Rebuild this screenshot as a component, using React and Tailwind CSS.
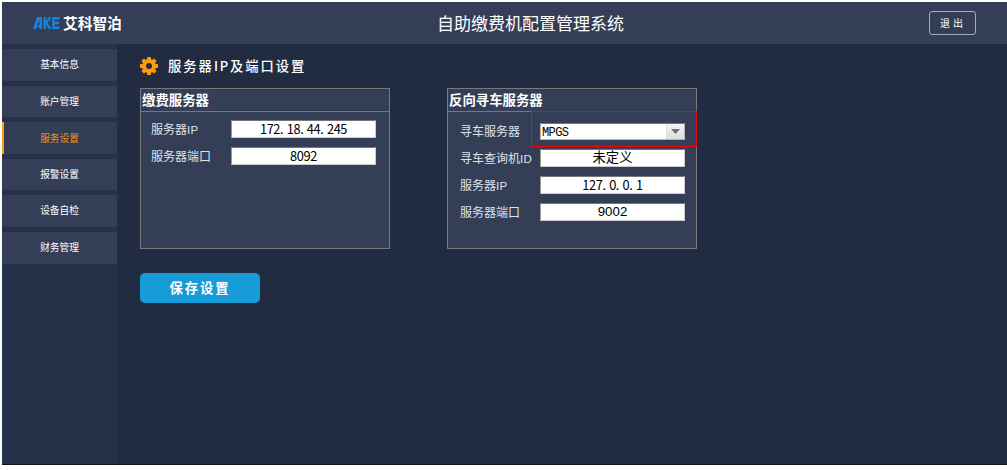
const menu = ["基本信息", "账户管理", "服务设置", "报警设置", "设备自检", "财务管理"];

function Gear() {
  return (
    <svg className="size-[18px] shrink-0" viewBox="-9 -9 18 18" fill="#fd9b0c">
      {[0, 45, 90, 135].map((a) => (
        <rect key={a} x="-2" y="-9" width="4" height="18" rx="0.6" transform={`rotate(${a})`} />
      ))}
      <circle r="6.9" />
      <circle r="3" fill="#212c42" />
    </svg>
  );
}

/* Half-width latin text: a dot takes up as much room as a digit. */
function Narrow({ text }) {
  return text.split(/(\.)/).map((part, i) =>
    part === "." ? (
      <span key={i} className="inline-block w-[6.7px] text-left">.</span>
    ) : (
      <span key={i}>{part}</span>
    )
  );
}

function Field({ label, latin = "", children }) {
  return (
    <div className="flex h-[18px] items-center">
      <div className="w-[80px] shrink-0 pt-px text-[12px] leading-[18px] whitespace-nowrap text-[#dfe3ea]">
        {label}
        <span className="font-['Liberation_Sans','Noto_Sans_CJK_SC',sans-serif] text-[11.5px] tracking-[0.3px]">{latin}</span>
      </div>
      {children}
    </div>
  );
}

function Input({ value, wide }) {
  return (
    <div className={`h-[18px] w-[145px] border border-t-[#777] border-l-[#999] border-r-[#ccc] border-b-[#ccc] bg-white text-center whitespace-nowrap text-black ${wide ? "font-['Liberation_Sans','Noto_Sans_CJK_SC',sans-serif] text-[13.3px] leading-[16px]" : "text-[12.8px] leading-[15px] tracking-[-0.4px]"}`}>
      <Narrow text={value} />
    </div>
  );
}

function Panel({ title, children }) {
  return (
    <section className="h-[161px] w-[250px] border border-[#777979] bg-[#343f57]">
      <h2 className="h-[23px] border-b border-[#777979] pl-px text-[13.4px] leading-[20px] font-bold text-white">{title}</h2>
      {children}
    </section>
  );
}

export default function App() {
  return (
    <div className="h-[470px] w-[1007px] overflow-hidden bg-white pt-[2px] pl-[2px] font-['Noto_Sans_CJK_SC',sans-serif]">
      <div className="flex h-[463px] flex-col border-b border-[#11121f] bg-[#212c42]">
        <header className="flex h-[42px] shrink-0 items-center bg-[#343f57]">
          <div className="ml-[31px] flex w-[404px] items-center">
            <svg className="h-[12px] w-[27px]" viewBox="0 0 27 12" fill="none" stroke="#1682dc" strokeWidth="2.4">
              <path d="M0 12L4 0H9V12H6.3V3.5H5.8L3 12Z" fill="#1682dc" stroke="none" />
              <path d="M3.5 9.3H6.6" strokeWidth="1.4" />
              <path d="M11.6 0V12M17.2 0L13 6L17.5 12" />
              <path d="M26.5 1.2H20.4V10.8H26.5M20 6H26" />
            </svg>
            <span className="ml-[3px] text-[14.7px] leading-[20px] font-bold text-white">艾科智泊</span>
          </div>
          <h1 className="w-[190px] text-[17px] leading-[24px] whitespace-nowrap text-white">自助缴费机配置管理系统</h1>
          <button className="ml-[302px] h-[24px] w-[47px] rounded-[3px] border border-[#a6acb8] pl-px text-[10px] leading-[22px] tracking-[3px] text-white">退出</button>
        </header>
        <div className="flex min-h-0 flex-1">
          <nav className="flex w-[115px] shrink-0 flex-col gap-[5px] bg-[#263249] pt-[5px]">
            {menu.map((item) => (
              <a
                key={item}
                className={`block h-[31.6px] text-center text-[9.7px] ${item === "服务设置" ? "border-l-2 border-[#fd9b1c] bg-[#323d53] pr-[2px] leading-[32px] text-[#f0921e]" : "bg-[#343f57] leading-[31px] text-white"}`}
              >
                {item}
              </a>
            ))}
          </nav>
          <main className="pt-[13px] pl-[23px]">
            <div className="flex h-[18px] items-center gap-[10px]">
              <Gear />
              <h2 className="text-[13.3px] leading-[18px] font-medium tracking-[2px] text-white">
                服务器<span className="text-[13px] tracking-[1.8px]">IP</span>及端口设置
              </h2>
            </div>
            <div className="mt-[13px] flex gap-[57px]">
              <Panel title="缴费服务器">
                <div className="flex flex-col gap-[9px] pt-[8px] pl-[10px]">
                  <Field label="服务器" latin="IP"><Input value="172.18.44.245" /></Field>
                  <Field label="服务器端口"><Input value="8092" /></Field>
                </div>
              </Panel>
              <Panel title="反向寻车服务器">
                <div className="relative flex flex-col gap-[9px] pt-[10px] pl-[12px]">
                  <Field label="寻车服务器">
                    <div className="mt-px flex h-[17px] w-[145px] border border-[#b5b5b5] border-t-[#777] bg-white text-[12px] leading-[16px] text-black">
                      <span className="flex-1 pt-px pl-px font-['Liberation_Mono','Noto_Sans_CJK_SC',monospace] tracking-[-0.6px]">MPGS</span>
                      <span className="flex w-[18px] items-center justify-center border-l border-[#ddd] bg-linear-to-b from-[#f5f5f5] to-[#dcdcdc]">
                        <svg className="h-[5px] w-[9px]" viewBox="0 0 9 5" fill="#707070"><path d="M0 0H9L4.5 5Z" /></svg>
                      </span>
                    </div>
                  </Field>
                  <Field label="寻车查询机" latin="ID"><Input value="未定义" wide /></Field>
                  <Field label="服务器" latin="IP"><Input value="127.0.0.1" /></Field>
                  <Field label="服务器端口"><Input value="9002" wide /></Field>
                  <div className="absolute -top-px left-[83px] h-[36px] w-[166px] border border-[#f00808]" />
                </div>
              </Panel>
            </div>
            <button className="mt-[24px] h-[30px] w-[120px] rounded-[5px] bg-[#189cd8] text-[13.3px] leading-[30px] font-bold tracking-[2px] text-white">保存设置</button>
          </main>
        </div>
      </div>
    </div>
  );
}
